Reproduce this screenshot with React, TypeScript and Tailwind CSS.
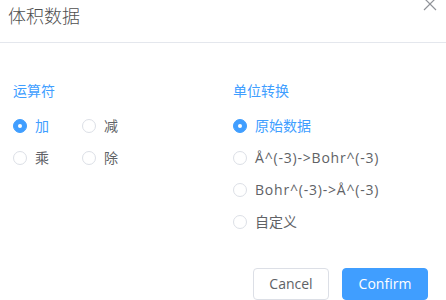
import { useState } from 'react';

type Option = { value: string; label: string; wide?: boolean };

const operators: Option[] = [
  { value: 'add', label: '加' },
  { value: 'sub', label: '减' },
  { value: 'mul', label: '乘' },
  { value: 'div', label: '除' },
];

const units: Option[] = [
  { value: 'raw', label: '原始数据' },
  { value: 'a2b', label: 'Å^(-3)->Bohr^(-3)', wide: true },
  { value: 'b2a', label: 'Bohr^(-3)->Å^(-3)', wide: true },
  { value: 'custom', label: '自定义' },
];

function Radio({ option, checked, onSelect }: { option: Option; checked: boolean; onSelect: () => void }) {
  return (
    <label className="flex h-8 cursor-pointer items-center gap-2" onClick={onSelect}>
      {checked ? (
        <span className="flex h-[14px] w-[14px] items-center justify-center rounded-full border border-[#409eff] bg-[#409eff]">
          <span className="h-1 w-1 rounded-full bg-white" />
        </span>
      ) : (
        <span className="h-[14px] w-[14px] rounded-full border border-[#dcdfe6] bg-white" />
      )}
      <span
        className={`text-sm leading-5 ${checked ? 'text-[#409eff]' : 'text-[#606266]'} ${
          option.wide ? 'tracking-[0.8px]' : ''
        }`}
      >
        {option.label}
      </span>
    </label>
  );
}

export default function App() {
  const [operator, setOperator] = useState('add');
  const [unit, setUnit] = useState('raw');

  return (
    <div className="relative flex h-[300px] w-[446px] flex-col overflow-hidden bg-white font-['Open_Sans','Noto_Sans_CJK_SC',sans-serif]">
      {/* Header */}
      <div className="h-[43px] border-b border-[#e4e7ed] pl-2 pt-1">
        <h1 className="text-[18px] font-light leading-6 text-[#505050]">体积数据</h1>
      </div>
      <button className="absolute right-[9px] top-[-3px] text-[#909399]">
        <svg width="14" height="14" viewBox="0 0 14 14" fill="none" stroke="currentColor" strokeWidth="1.2">
          <path d="M1 1l12 12M13 1L1 13" />
        </svg>
      </button>

      {/* Body */}
      <div className="grid grid-cols-[220px_1fr] px-[13px] pt-[38px]">
        <div>
          <div className="text-sm leading-5 text-[#409eff]">运算符</div>
          <div className="mt-[9px] grid grid-cols-[69px_1fr]">
            {operators.map((o) => (
              <Radio key={o.value} option={o} checked={operator === o.value} onSelect={() => setOperator(o.value)} />
            ))}
          </div>
        </div>
        <div>
          <div className="text-sm leading-5 text-[#409eff]">单位转换</div>
          <div className="mt-[9px] flex flex-col">
            {units.map((u) => (
              <Radio key={u.value} option={u} checked={unit === u.value} onSelect={() => setUnit(u.value)} />
            ))}
          </div>
        </div>
      </div>

      {/* Footer */}
      <div className="mt-[30px] flex justify-end gap-[13px] pr-[18px]">
        <button className="h-8 w-[76px] rounded border border-[#dcdfe6] bg-white text-sm text-[#606266]">Cancel</button>
        <button className="h-8 w-[86px] rounded border border-[#409eff] bg-[#409eff] text-sm text-white">Confirm</button>
      </div>
    </div>
  );
}
